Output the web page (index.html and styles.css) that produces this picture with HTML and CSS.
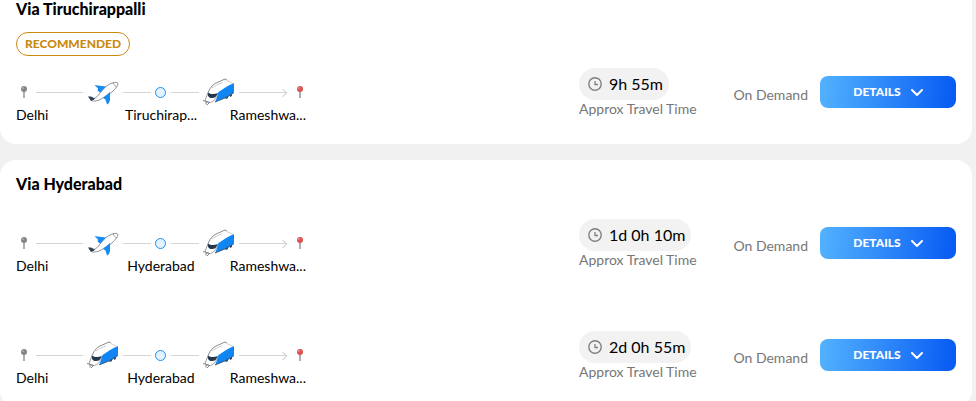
FILE: index.html
```html
<!DOCTYPE html>
<html lang="en">
<head>
    <meta charset="UTF-8">
    <meta name="viewport" content="width=device-width, initial-scale=1.0">
    <title>Delhi to Rameshwaram</title>
    <link rel="stylesheet" href="styles.css">
</head>
<body>
    <!-- shared icons -->
    <svg class="sprite" aria-hidden="true">
        <symbol id="pin" viewBox="0 0 8 14">
            <path d="M4 6v7" stroke="#777" stroke-width="1.2"/>
            <circle cx="4" cy="4" r="3" fill="currentColor"/>
            <circle cx="3" cy="3" r="1" fill="#fff" opacity=".35"/>
        </symbol>
        <symbol id="plane" viewBox="0 0 32 28">
            <path d="M6 23C4 23 4 22 6 21c3-1 5-3 7-6 4-5 7-8 12-10 3-1 6-1 6 1s-3 5-6 8c-4 3-8 5-11 7-3 2-6 2-8 2z" fill="#fff" stroke="#92929a" stroke-width="1"/>
            <path d="M26 5c1 2 2 3 4 4" fill="none" stroke="#92929a" stroke-width="1"/>
            <path d="M1 18.500l3 0 4 2-1 1-3 1.500z" fill="#33415a"/>
            <path d="M7.500 7l3 .5 8.500 1-6 6-2.500-2 .5-2z" fill="#168bf2"/>
            <path d="M16 20l7-6v8l-1 3-2 1.500-1.500-5z" fill="#168bf2"/>
        </symbol>
        <symbol id="train" viewBox="0 0 32 28">
            <path d="M3 22C4 15 7 10 12 6l10-5 9 4v10l-18 9-8 2z" fill="#fff"/>
            <path d="M15.500 14C20 11 25 7.500 31 5v10c-5 4-11 6-19 9 2-3 2-7 3.500-10z" fill="#0f86f4"/>
            <path d="M12 24c7-3 13-5 18-9" fill="none" stroke="#466181" stroke-width="1"/>
            <path d="M22 20l3-2v2l-2 1zM27 17l2-1v2l-2 1z" fill="#344a68"/>
            <path d="M5 14.500c3 2 6 2 10 .5-1 3-3 5-6 5s-5-2-4-5.500z" fill="#26364e"/>
            <path d="M4.500 16C6 12 8 8 12 5.500L22 1l2 1" fill="none" stroke="#8b8b90" stroke-width="1"/>
            <path d="M9 10c3-2 6-4 10-5M24 2.500l6 3" fill="none" stroke="#ccc" stroke-width="1"/>
            <path d="M4.500 16L2.500 21c-1 3 2 4 5 3.500 3-1 5-3 6-6" fill="none" stroke="#9d9da3" stroke-width="1"/>
            <path d="M0 22.500l6 1.500M4 27l3-3M3 23.500v3" fill="none" stroke="#85858a" stroke-width="1"/>
        </symbol>
        <symbol id="clock" viewBox="0 0 14 14">
            <circle cx="7" cy="7" r="6.200" fill="none" stroke="#808080" stroke-width="1.400"/>
            <path d="M7 4v3.500h3" fill="none" stroke="#808080" stroke-width="1.300"/>
        </symbol>
        <symbol id="chevron" viewBox="0 0 12 8">
            <path d="M1 1l5 5 5-5" fill="none" stroke="#fff" stroke-width="2" stroke-linecap="round" stroke-linejoin="round"/>
        </symbol>
    </svg>

    <main class="routes">
        <section class="card card-first">
            <h2>Via Tiruchirappalli</h2>
            <span class="badge">RECOMMENDED</span>
            <div class="option">
                <div class="route">
                    <div class="track">
                        <svg class="pin"><use href="#pin"/></svg>
                        <span class="line"></span>
                        <svg class="vehicle"><use href="#plane"/></svg>
                        <span class="line"></span>
                        <span class="stop"></span>
                        <span class="line"></span>
                        <svg class="vehicle"><use href="#train"/></svg>
                        <span class="line arrow"></span>
                        <svg class="pin pin-end"><use href="#pin"/></svg>
                    </div>
                    <div class="places">
                        <span>Delhi</span>
                        <span>Tiruchirap...</span>
                        <span>Rameshwa...</span>
                    </div>
                </div>
                <div class="time">
                    <div class="duration"><svg><use href="#clock"/></svg>9h 55m</div>
                    <div class="note">Approx Travel Time</div>
                </div>
                <div class="price">On Demand</div>
                <button class="details" type="button">DETAILS <svg><use href="#chevron"/></svg></button>
            </div>
        </section>

        <section class="card">
            <h2>Via Hyderabad</h2>
            <div class="option">
                <div class="route">
                    <div class="track">
                        <svg class="pin"><use href="#pin"/></svg>
                        <span class="line"></span>
                        <svg class="vehicle"><use href="#plane"/></svg>
                        <span class="line"></span>
                        <span class="stop"></span>
                        <span class="line"></span>
                        <svg class="vehicle"><use href="#train"/></svg>
                        <span class="line arrow"></span>
                        <svg class="pin pin-end"><use href="#pin"/></svg>
                    </div>
                    <div class="places">
                        <span>Delhi</span>
                        <span>Hyderabad</span>
                        <span>Rameshwa...</span>
                    </div>
                </div>
                <div class="time">
                    <div class="duration"><svg><use href="#clock"/></svg>1d 0h 10m</div>
                    <div class="note">Approx Travel Time</div>
                </div>
                <div class="price">On Demand</div>
                <button class="details" type="button">DETAILS <svg><use href="#chevron"/></svg></button>
            </div>
            <div class="option">
                <div class="route">
                    <div class="track">
                        <svg class="pin"><use href="#pin"/></svg>
                        <span class="line"></span>
                        <svg class="vehicle"><use href="#train"/></svg>
                        <span class="line"></span>
                        <span class="stop"></span>
                        <span class="line"></span>
                        <svg class="vehicle"><use href="#train"/></svg>
                        <span class="line arrow"></span>
                        <svg class="pin pin-end"><use href="#pin"/></svg>
                    </div>
                    <div class="places">
                        <span>Delhi</span>
                        <span>Hyderabad</span>
                        <span>Rameshwa...</span>
                    </div>
                </div>
                <div class="time">
                    <div class="duration"><svg><use href="#clock"/></svg>2d 0h 55m</div>
                    <div class="note">Approx Travel Time</div>
                </div>
                <div class="price">On Demand</div>
                <button class="details" type="button">DETAILS <svg><use href="#chevron"/></svg></button>
            </div>
        </section>
    </main>
</body>
</html>
```

FILE: styles.css
```css
* {
    box-sizing: border-box;
}
body {
    margin: 0;
    padding-right: 4px;
    background: #f1f1f1;
    color: #000;
    font-family: Lato, sans-serif;
    font-size: 14px;
    line-height: 18px;
    overflow: hidden;
}
.sprite {
    display: none;
}
.routes {
    display: flex;
    flex-direction: column;
    gap: 16px;
}
.card {
    padding: 15px 16px 20px;
    background: #fff;
    border-radius: 16px;
}
.card-first {
    padding-top: 0;
    border-radius: 0 0 16px 16px;
}
h2 {
    margin: 0;
    font-size: 16px;
    line-height: 18px;
    font-weight: 900;
}
.badge {
    display: block;
    width: fit-content;
    margin-top: 14px;
    padding: 0 8px;
    border: 1px solid #c98a10;
    border-radius: 12px;
    color: #c98a10;
    font-size: 12px;
    line-height: 22px;
    font-weight: 900;
}
.option {
    display: flex;
    align-items: flex-start;
    margin-top: 56px;
}
h2 + .option {
    margin-top: 26px;
}
.badge + .option {
    margin-top: 12px;
}
.route {
    width: 294px;
    padding-top: 10px;
}
.track {
    display: grid;
    grid-template-columns: 16px 1fr 32px 28px 12px 28px 32px 1fr 20px;
    gap: 4px;
    align-items: center;
    height: 28px;
}
.pin {
    justify-self: center;
    width: 8px;
    height: 14px;
    color: #858585;
}
.pin-end {
    color: #d9534f;
}
.vehicle {
    width: 32px;
    height: 28px;
}
.line {
    height: 1px;
    background: #d4d4d4;
}
.arrow::after {
    content: "";
    display: block;
    width: 5px;
    height: 5px;
    margin: -2px 0 0 auto;
    border: solid #d0d0d0;
    border-width: 1px 1px 0 0;
    transform: rotate(45deg);
}
.stop {
    width: 11px;
    height: 11px;
    border: 1px solid #1a91f5;
    border-radius: 50%;
    background: #e3f2ff;
}
.places {
    display: grid;
    grid-template-columns: 1fr 1fr 1fr;
    padding-right: 4px;
    text-align: center;
}
.places span:first-child {
    text-align: left;
}
.places span:last-child {
    text-align: right;
}
.time {
    width: 150px;
    margin-left: auto;
}
.duration {
    display: flex;
    align-items: center;
    gap: 7px;
    width: fit-content;
    height: 32px;
    padding: 0 6px 0 9px;
    border-radius: 16px;
    background: #f2f2f2;
    font-size: 16px;
}
.duration svg {
    width: 14px;
    height: 14px;
}
.note {
    color: #777;
}
.price {
    width: 79px;
    margin-top: 18px;
    color: #777;
    text-align: right;
    white-space: nowrap;
}
.details {
    display: flex;
    align-items: center;
    justify-content: center;
    gap: 10px;
    width: 136px;
    height: 32px;
    margin: 8px 0 0 12px;
    padding: 0 0 1px;
    border: 0;
    border-radius: 8px;
    background: linear-gradient(93deg, #53b2fe, #065af3);
    color: #fff;
    font-family: inherit;
    font-size: 12px;
    font-weight: 900;
    cursor: pointer;
}
.details svg {
    width: 12px;
    height: 8px;
    margin-top: 2px;
}
```
